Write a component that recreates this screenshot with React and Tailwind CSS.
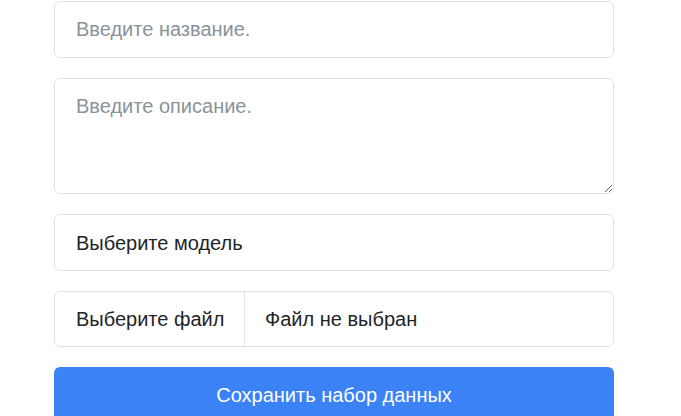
export default function App() {
  const font = { fontFamily: '"Liberation Sans", Arial, sans-serif' };
  return (
    <div className="w-[681px] h-[416px] overflow-hidden bg-white" style={font}>
      <div className="ml-[54px] w-[560px] pt-px flex flex-col gap-[20px]">
        <input
          className="h-[57px] w-full rounded-[6px] border border-[#dee2e6] px-[21px] text-[20px] text-[#212529] placeholder:text-[#8a939b] outline-none"
          placeholder="Введите название."
        />
        <textarea
          className="h-[116px] w-full rounded-[6px] border border-[#dee2e6] px-[21px] pt-[12px] text-[20px] leading-[30px] text-[#212529] placeholder:text-[#8a939b] outline-none resize-y"
          placeholder="Введите описание."
        />
        <div className="h-[57px] w-full rounded-[6px] border border-[#dee2e6] px-[21px] flex items-center text-[20px] text-[#212529]">
          Выберите модель
        </div>
        <div className="h-[56px] w-full rounded-[6px] border border-[#dee2e6] flex items-stretch text-[20px] text-[#212529]">
          <div className="flex items-center pl-[21px] border-r border-[#dee2e6] w-[190px] shrink-0 whitespace-nowrap">Выберите файл</div>
          <div className="flex items-center pl-[20px] whitespace-nowrap">Файл не выбран</div>
        </div>
        <button className="h-[56px] w-full rounded-[6px] bg-[#3b82f6] text-white text-[20px] flex items-center justify-center">
          Сохранить набор данных
        </button>
      </div>
    </div>
  );
}
